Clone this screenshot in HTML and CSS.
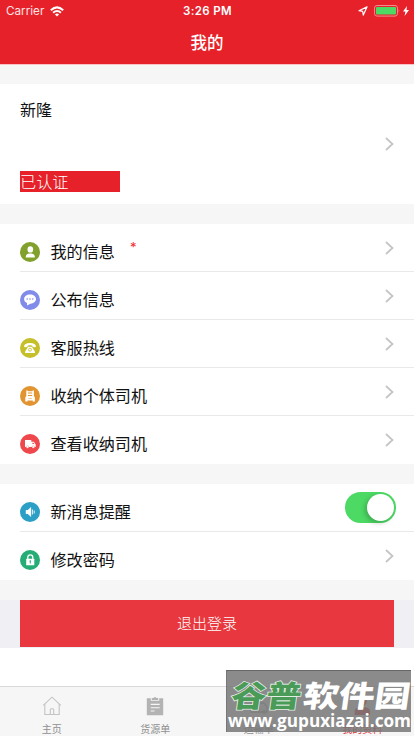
FILE: index.html
```html
<!DOCTYPE html>
<html lang="zh-CN">
<head>
<meta charset="utf-8">
<title>我的</title>
<link rel="stylesheet" href="styles.css">
</head>
<body>
<svg class="defs" width="0" height="0"><symbol id="chevron" viewBox="0 0 9 14"><path d="M1 1l6.5 6L1 13" fill="none" stroke="#c5c5c9" stroke-width="1.8"/></symbol></svg>
<div class="screen">
  <header>
    <div class="status">
      <div class="carrier"><span>Carrier</span>
        <svg width="14" height="11" viewBox="0 0 14 11"><g fill="none" stroke="#fff" stroke-width="2"><path d="M.8 4.2q6.2-5.6 12.4 0M3.1 6.7q3.9-3.4 7.8 0"/></g><path d="M4.9 8.4q2.1-1.7 4.2 0L7 10.6z" fill="#fff"/></svg>
      </div>
      <span class="time">3:26 PM</span>
      <div class="power">
        <svg width="10" height="10" viewBox="0 0 10 10"><path d="M9 .9L1 4.7l3.7.6.6 3.8z" fill="none" stroke="#fff" stroke-width="1.2" stroke-linejoin="round"/></svg>
        <svg class="battery" width="26" height="12" viewBox="0 0 26 12"><rect x=".5" y=".5" width="23" height="10.6" rx="2.5" fill="none" stroke="#f28c91"/><rect x="2" y="2" width="20" height="7.6" rx="1" fill="#4cd964"/><path d="M24.7 4q1.3 1.8 0 3.6z" fill="#f28c91"/></svg>
        <svg class="bolt" width="6" height="10" viewBox="0 0 6 10"><path d="M4 0L0 5.6h2.4L1.6 10 6 4.1H3.5z" fill="#fff"/></svg>
      </div>
    </div>
    <h1>我的</h1>
  </header>
  <main>
    <section class="profile">
      <div><div class="name">新隆</div><div class="verified">已认证</div></div>
      <svg class="chevron"><use href="#chevron"/></svg>
    </section>
    <section class="list">
      <div class="row"><svg class="icon" viewBox="0 0 20 20"><circle cx="10" cy="10" r="10" fill="#82a02c"/><ellipse cx="10.3" cy="7.4" rx="2.8" ry="3.2" fill="#fff"/><path d="M5.7 15.4q0-3.5 3.2-3.9h2.8q3.2.4 3.2 3.9z" fill="#fff"/></svg><span>我的信息</span><b class="mark">*</b><svg class="chevron"><use href="#chevron"/></svg></div>
      <div class="row"><svg class="icon" viewBox="0 0 20 20"><circle cx="10" cy="10" r="10" fill="#808bea"/><path d="M10 4.5c3.5 0 6 2 6 4.6s-2.4 4.6-5.6 4.6L7 15.5v-2.4C5.2 12.3 4.1 10.9 4.1 9.1 4.1 6.5 6.6 4.5 10 4.5z" fill="#fff"/><g fill="#808bea"><circle cx="7.2" cy="9" r=".8"/><circle cx="10" cy="9" r=".8"/><circle cx="12.8" cy="9" r=".8"/></g></svg><span>公布信息</span><svg class="chevron"><use href="#chevron"/></svg></div>
      <div class="row"><svg class="icon" viewBox="0 0 20 20"><circle cx="10" cy="10" r="10" fill="#c5bf29"/><path d="M4 8.5Q4.2 5 10 5t6 3.5q-.2 1-1.5.8l-2-.5-.3-1.3q-2.2-.5-4.4 0l-.3 1.3-2 .5Q4.2 9.5 4 8.5z" fill="#fff"/><path d="M8.1 8.8h3.8l3 4.8v1.5H5.1v-1.5z" fill="#fff"/><circle cx="10" cy="11.7" r="1.5" fill="none" stroke="#c5bf29" stroke-width=".8"/></svg><span>客服热线</span><svg class="chevron"><use href="#chevron"/></svg></div>
      <div class="row"><svg class="icon" viewBox="0 0 20 20"><circle cx="10" cy="10" r="10" fill="#e29431"/><path d="M6.3 4.6h1.4v.7h4.8v-.7h1.4v5.7l1 1v4.1h-2.2v-.9H7.5v.9H5.3v-4.1l1-1z" fill="#fff"/><path d="M8 6.6h4.2v1H8zM8 9h4.2v.9H8zM8.4 12h3.4v.6H8.4z" fill="#e29431"/></svg><span>收纳个体司机</span><svg class="chevron"><use href="#chevron"/></svg></div>
      <div class="row"><svg class="icon" viewBox="0 0 20 20"><circle cx="10" cy="10" r="10" fill="#ee484c"/><path d="M5 6.1h6.3v6.8H5zM11.3 7.8h2.6l1.8 2.6v2.5h-4.4z" fill="#fff"/><path d="M12.4 8.7h1.1l.9 1.3h-2z" fill="#ee484c"/><circle cx="7.5" cy="13" r="1.3" fill="#fff" stroke="#ee484c" stroke-width=".3"/><circle cx="13.3" cy="13" r="1.3" fill="#fff" stroke="#ee484c" stroke-width=".3"/></svg><span>查看收纳司机</span><svg class="chevron"><use href="#chevron"/></svg></div>
    </section>
    <section class="list">
      <div class="row"><svg class="icon" viewBox="0 0 20 20"><circle cx="10" cy="10" r="10" fill="#2b9fc6"/><path d="M5.8 8h2l3.3-3v10l-3.3-3h-2z" fill="#fff"/><path d="M12.4 7.5v5M14.2 8.5v3" stroke="#fff" stroke-width=".9"/></svg><span>新消息提醒</span><div class="toggle"><div class="knob"></div></div></div>
      <div class="row"><svg class="icon" viewBox="0 0 20 20"><circle cx="10" cy="10" r="10" fill="#26ac75"/><path d="M7.8 9V7.4q0-2.5 2.5-2.5t2.5 2.5V9" fill="none" stroke="#fff" stroke-width="1.3"/><rect x="6.2" y="8.7" width="8.1" height="6.5" rx=".5" fill="#fff"/><circle cx="10.3" cy="11" r=".8" fill="#26ac75"/><path d="M10.3 11v2.6" stroke="#26ac75" stroke-width=".9"/></svg><span>修改密码</span><svg class="chevron"><use href="#chevron"/></svg></div>
    </section>
    <div class="logout"><div class="button">退出登录</div></div>
  </main>
  <nav>
    <div class="tab"><svg viewBox="0 0 20 20"><path d="M1.2 9.4L10 1.2l8.8 8.2M2.8 8.2v10.3h14.4V8.2M8.3 18.5v-5q0-.8 1.7-.8t1.7.8v5" fill="none" stroke="#c4c4c4" stroke-width="1.1"/></svg><span>主页</span></div>
    <div class="tab"><svg viewBox="0 0 20 20"><path d="M1.8 2.2h4v2.6h8.4V2.2h4v17H1.8z" fill="#b3b3b3"/><path d="M6.8 4V1.9h1.8Q10 .1 11.4 1.9h1.8V4z" fill="#b3b3b3"/><path d="M5.7 8.4h9M5.7 11.7h9M5.7 15h3.8" stroke="#f6f6f6" stroke-width="1.1"/></svg><span>货源单</span></div>
    <div class="tab"><svg viewBox="0 0 20 20"><path d="M2 3h8v13H2zM10 7h5l3 4v5h-8" fill="none" stroke="#aaa" stroke-width="1.3"/><circle cx="15" cy="16" r="2" fill="#aaa"/></svg><span>运输单</span></div>
    <div class="tab active"><svg viewBox="0 0 20 20"><ellipse cx="10.5" cy="5.3" rx="4.2" ry="5" fill="#df3238"/><path d="M2.6 19v-4q0-3 5.4-4l2.5 2 2.5-2q5 1 5 4v4z" fill="#df3238"/></svg><span>我的资料</span></div>
  </nav>
  <div class="watermark">
    <svg width="185" height="62" viewBox="0 0 185 62">
      <g class="brand" transform="translate(7 0) skewX(-8)"><text class="green" x="1" y="36" textLength="70" lengthAdjust="spacingAndGlyphs">谷普</text><text x="73" y="36" textLength="107" lengthAdjust="spacingAndGlyphs">软件园</text></g>
      <text class="site" x="1" y="55.5" textLength="183" lengthAdjust="spacingAndGlyphs">www.gupuxiazai.com</text>
    </svg>
  </div>
</div>
</body>
</html>
```
FILE: styles.css
```css
* { box-sizing: border-box; }
body { margin: 0; font-family: Inter, "Noto Sans CJK SC", sans-serif; color: #111; }
svg { display: block; flex: none; }
.defs { position: absolute; }
.screen { position: relative; width: 414px; height: 736px; overflow: hidden; background: #fff; display: flex; flex-direction: column; }
header { height: 64px; flex: none; background: #e62129; color: #fff; }
.status { height: 20px; padding: 1px 5px 0 6px; display: grid; grid-template-columns: 1fr auto 1fr; align-items: center; font-size: 12px; line-height: 20px; }
.carrier { display: flex; align-items: center; gap: 6px; color: #ffe3e4; font-size: 11.7px; }
.time { font-size: 11.5px; font-weight: 600; letter-spacing: .35px; }
.power { display: flex; justify-content: flex-end; align-items: center; }
.battery { margin-left: 6px; margin-top: -1px; }
.bolt { margin-left: 3px; }
h1 { margin: 0; padding-top: 1px; font-size: 16.5px; font-weight: 500; line-height: 44px; text-align: center; }
main { background: #f6f6f6; padding-top: 20px; border-top: 1px solid #f9c2c5; margin-bottom: auto; }
.profile { margin-top: -1px; height: 120px; background: #fff; padding: 0 20px; display: flex; justify-content: space-between; align-items: center; }
.profile > div { align-self: flex-start; padding-top: 14px; }
.name { font-size: 16px; line-height: 24px; }
.verified { margin-top: 49px; width: 100px; height: 21px; line-height: 22px; background: #e62129; color: #fff; font-size: 16.2px; font-weight: 300; }
.chevron { width: 9px; height: 14px; }
.list { margin-top: 20px; background: #fff; padding-left: 20px; }
.row { height: 48px; padding: 8px 20px 0 0; display: flex; align-items: center; border-bottom: 1px solid #e9e9eb; font-size: 16.1px; line-height: 24px; }
.row:last-child { border-color: transparent; }
.row > span { padding-top: 1px; }
.row > .icon { width: 20px; height: 20px; margin-right: 10.5px; }
.row > .chevron { margin: 0 0 8px auto; }
.mark { margin: -9px 0 0 15px; color: #f2282d; font-size: 13px; font-weight: 400; line-height: 20px; }
.toggle { width: 51px; height: 31px; margin: 0 -2px 9px auto; padding: 2px; border-radius: 16px; background: #4cd964; display: flex; justify-content: flex-end; }
.knob { width: 27px; height: 27px; border-radius: 50%; background: #fff; box-shadow: -2px 2px 5px #00000038; }
.logout { margin-top: 20px; height: 48px; padding: 0 20px; background: #efeff4; }
.button { height: 47px; line-height: 48px; background: #e8373e; color: #fff; font-size: 15px; font-weight: 300; text-align: center; }
nav { height: 50px; flex: none; display: grid; grid-template-columns: repeat(4, 1fr); border-top: 1px solid #d9d9dc; background: #f6f6f6; }
.tab { display: flex; flex-direction: column; align-items: center; padding-top: 9px; color: #8f8f8f; font-size: 10px; line-height: 14px; }
.tab svg { width: 20px; height: 20px; margin-bottom: 6px; }
.active { color: #df3238; }
.watermark { position: absolute; left: 226px; top: 670px; width: 185px; height: 62px; background: #777777d9; border-top: 1px solid #666; border-left: 1px solid #777; }
.brand { font: 900 30px "Noto Sans CJK SC", sans-serif; fill: #fff; }
.green { fill: #4a9a58; stroke: #e4eee5; stroke-width: 1.5px; paint-order: stroke; }
.site { font: 700 17px "Open Sans", sans-serif; fill: #fff; }
```
